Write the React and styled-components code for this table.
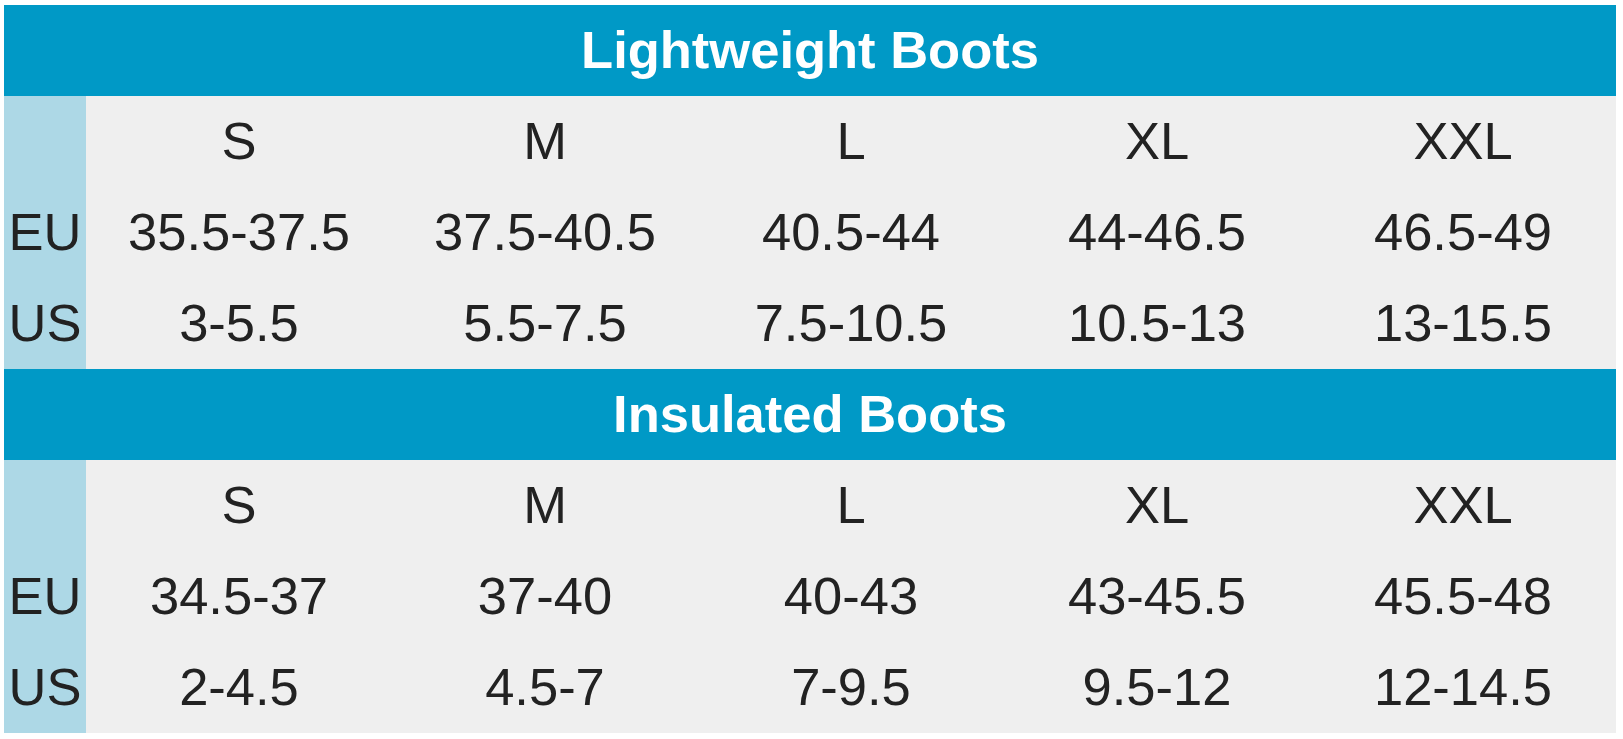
import React from 'react';
import styled, { createGlobalStyle } from 'styled-components';

const GlobalStyle = createGlobalStyle`
  body {
    margin: 0;
    background: #ffffff;
    font-family: "Liberation Sans", Arial, sans-serif;
  }
`;

const Page = styled.div`
  padding: 5px 4px;
`;

const Chart = styled.div`
  width: 1612px;
  display: grid;
  grid-template-columns: 82px repeat(5, 1fr);
  grid-auto-rows: 91px;
  color: #222222;
  font-size: 52.5px;
`;

const SectionTitle = styled.div`
  grid-column: 1 / -1;
  background: #0099c6;
  color: #ffffff;
  font-weight: bold;
  display: flex;
  align-items: center;
  justify-content: center;
  padding-bottom: 2px;
`;

const RowLabel = styled.div`
  background: #add8e6;
  display: flex;
  align-items: center;
  justify-content: center;
  padding-bottom: 2px;
`;

const Cell = styled.div`
  background: #efefef;
  display: flex;
  align-items: center;
  justify-content: center;
  padding-bottom: 2px;
`;

const sizes = ['S', 'M', 'L', 'XL', 'XXL'];

const sections = [
  {
    title: 'Lightweight Boots',
    eu: ['35.5-37.5', '37.5-40.5', '40.5-44', '44-46.5', '46.5-49'],
    us: ['3-5.5', '5.5-7.5', '7.5-10.5', '10.5-13', '13-15.5'],
  },
  {
    title: 'Insulated Boots',
    eu: ['34.5-37', '37-40', '40-43', '43-45.5', '45.5-48'],
    us: ['2-4.5', '4.5-7', '7-9.5', '9.5-12', '12-14.5'],
  },
];

function SizeRow({ label, values }) {
  return (
    <>
      <RowLabel>{label}</RowLabel>
      {values.map((v, i) => (
        <Cell key={i}>{v}</Cell>
      ))}
    </>
  );
}

export default function App() {
  return (
    <Page>
      <GlobalStyle />
      <Chart>
        {sections.map(section => (
          <React.Fragment key={section.title}>
            <SectionTitle>{section.title}</SectionTitle>
            <SizeRow label="" values={sizes} />
            <SizeRow label="EU" values={section.eu} />
            <SizeRow label="US" values={section.us} />
          </React.Fragment>
        ))}
      </Chart>
    </Page>
  );
}
